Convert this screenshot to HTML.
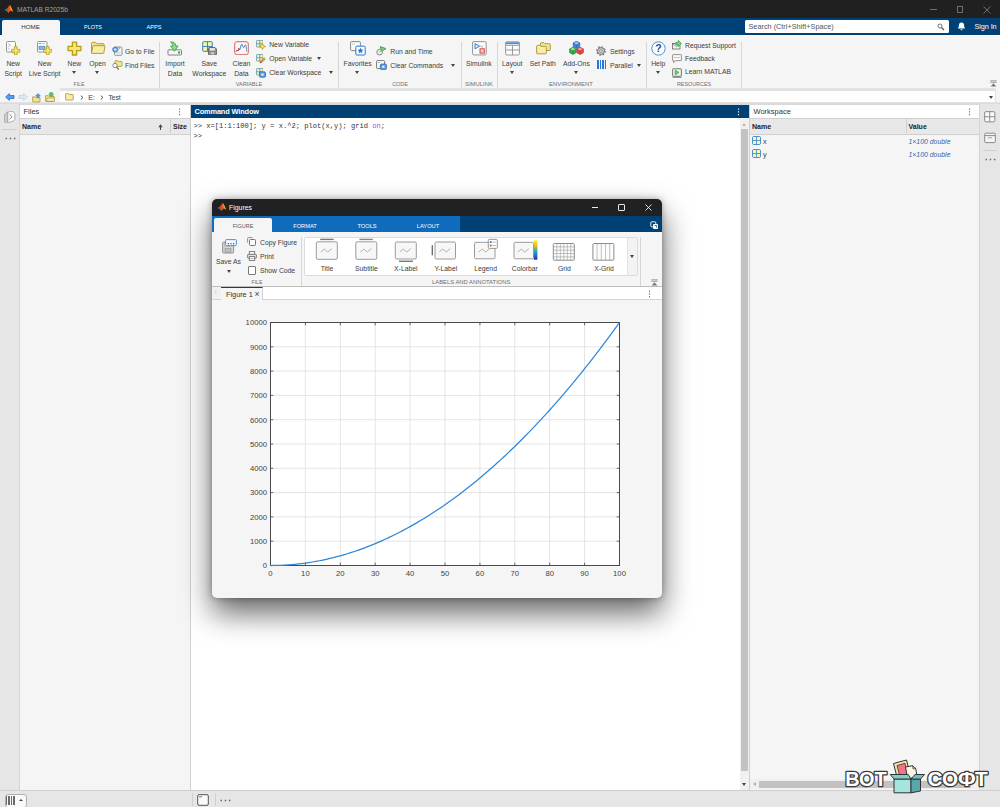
<!DOCTYPE html>
<html><head><meta charset="utf-8"><title>MATLAB R2025b</title>
<style>
*{box-sizing:border-box;margin:0;padding:0}
html,body{width:1000px;height:807px;overflow:hidden;background:#f5f5f5;font-family:"Liberation Sans",sans-serif;font-size:6.8px;color:#3c3c3c}
.a{position:absolute}
.t{position:absolute;white-space:nowrap;line-height:9px}
.c{text-align:center}
#titlebar{left:0;top:0;width:1000px;height:18px;background:#202020}
#tabbar{left:0;top:18px;width:1000px;height:17px;background:#004175}
#ribbon{left:0;top:35px;width:1000px;height:54px;background:#f5f5f5}
#addr{left:0;top:89px;width:1000px;height:15px;background:#f5f5f5}
.sep{position:absolute;width:1px;background:#d6d6d6;top:42px;height:46px}
.gl{color:#6e6e6e;font-size:6px;letter-spacing:0}
.dd{position:absolute;width:0;height:0;border-left:2.5px solid transparent;border-right:2.5px solid transparent;border-top:3px solid #444}
</style></head><body>
<!-- MAIN -->
<div class="a" id="titlebar"></div>
<div class="t" style="left:17px;top:5.2px;color:#a0a0a0;font-size:6.6px">MATLAB R2025b</div>
<div class="a" id="tabbar"></div>
<div class="a" style="left:1.5px;top:20px;width:58px;height:16px;background:#f5f5f5;border-radius:2px 2px 0 0"></div>
<div class="t c" style="left:1.5px;width:58px;top:22px;font-size:6.2px;color:#333">HOME</div>
<div class="t c" style="left:62.5px;width:60px;top:22px;font-size:6.2px;color:#fff;transform:scaleX(.88)">PLOTS</div>
<div class="t c" style="left:124px;width:60px;top:22px;font-size:6.2px;color:#fff;transform:scaleX(.9)">APPS</div>
<div class="a" id="ribbon"></div><div class="a" style="left:60px;top:34.500px;width:940px;height:1.500px;background:#fcfcfc"></div>
<div class="a" id="addr"></div>
<svg class="a" style="left:4.200px;top:5px" width="9.500" height="8.600" viewBox="0 0 11 10"><path d="M.3 5.800l2.800-1.300 1.300 1.400-1.500 1.200z" fill="#3a7bc0"/><path d="M3.100 4.500c1.200-.8 2.200-3.300 3.500-4.100.9-.3 1.900 2.600 3.900 7.300-1.100-.6-2-1.500-2.700-1.300-.8.300-1.400 1.800-2.300 2.800l-2.600-2.100 1.500-1.200z" fill="#d9541e"/><path d="M6.600.4c.9-.3 1.900 2.600 3.900 7.300-1.100-.6-2-1.500-2.700-1.300-.5-2.300-.7-4.500-1.200-6z" fill="#f6a21b"/></svg>
<div class="a" style="left:930px;top:9px;width:6.500px;height:1px;background:#6e6e6e"></div><div class="a" style="left:956.500px;top:6px;width:6.500px;height:6.500px;border:1px solid #6e6e6e"></div><svg class="a" style="left:983px;top:6px" width="8" height="8" viewBox="0 0 8 8"><path d="M.5.500l7 7M7.500.500l-7 7" stroke="#777" stroke-width=".9"/></svg>
<div class="a" style="left:745px;top:20px;width:203.500px;height:12.500px;background:#fff;border-radius:1.500px"></div><div class="t" style="left:748.5px;top:22px;font-size:7.3px;color:#555">Search (Ctrl+Shift+Space)</div>
<svg class="a" style="left:937px;top:23px" width="8" height="8" viewBox="0 0 8 8"><circle cx="3" cy="3" r="2" fill="none" stroke="#666" stroke-width=".9"/><path d="M4.500 4.500l2.500 2.500" stroke="#555" stroke-width="1.200"/></svg>
<svg class="a" style="left:957px;top:22px" width="9" height="9" viewBox="0 0 9 9"><path d="M4.500.500c1.700 0 2.600 1.300 2.600 2.900 0 1.700.6 2.500 1.200 3.100h-7.600c.6-.6 1.200-1.400 1.200-3.100 0-1.600.9-2.900 2.600-2.900z" fill="#fff"/><path d="M3.500 7.200h2c0 .7-.4 1.100-1 1.100s-1-.4-1-1.100z" fill="#fff"/></svg>
<div class="t" style="left:974.5px;top:22px;font-size:7.3px;color:#fff;letter-spacing:-.1px">Sign In</div>
<svg class="a" style="left:5.500px;top:40.500px" width="11" height="12" viewBox="0 0 11 12"><rect x=".5" y=".5" width="9" height="10.500" rx="1" fill="#fbfbfb" stroke="#8a8a8a" stroke-width=".9"/><path d="M2.300 2.600l2.200 1.700M2.300 6l2.200-1.700M2.300 7.800h1.500" stroke="#9a9a9a" stroke-width=".7" fill="none"/></svg>
<svg class="a" style="left:11.3px;top:45.8px" width="9.5" height="9.5" viewBox="0 0 10 10"><path d="M3.600.700h2.800v2.900h2.900v2.800h-2.900v2.900h-2.800v-2.900h-2.900v-2.800h2.900z" fill="#f6e76a" stroke="#b89d1c" stroke-width=".9" stroke-linejoin="round"/></svg>
<div class="t c " style="left:-26.8px;width:80px;top:58.9px;">New</div>
<div class="t c " style="left:-26.8px;width:80px;top:68.7px;">Script</div>
<svg class="a" style="left:37px;top:40.500px" width="11" height="12" viewBox="0 0 11 12"><rect x=".5" y=".5" width="9.500" height="10.500" rx="1" fill="#fbfbfb" stroke="#8a8a8a" stroke-width=".9"/><path d="M2 2.500h2" stroke="#d05050" stroke-width=".8"/><path d="M5 2.500h3" stroke="#aaa" stroke-width=".7"/><rect x="2" y="5.200" width="6" height="3.300" fill="#7db7ee" stroke="#3b7fc4" stroke-width=".6"/></svg>
<svg class="a" style="left:42.8px;top:45.8px" width="9.5" height="9.5" viewBox="0 0 10 10"><path d="M3.600.700h2.800v2.900h2.900v2.800h-2.900v2.900h-2.800v-2.900h-2.900v-2.800h2.900z" fill="#f6e76a" stroke="#b89d1c" stroke-width=".9" stroke-linejoin="round"/></svg>
<div class="t c " style="left:4.600000000000001px;width:80px;top:58.9px;">New</div>
<div class="t c " style="left:4.600000000000001px;width:80px;top:68.7px;">Live Script</div>
<svg class="a" style="left:67px;top:40.5px" width="15" height="15" viewBox="0 0 10 10"><path d="M3.600.700h2.800v2.900h2.900v2.800h-2.900v2.900h-2.800v-2.900h-2.900v-2.800h2.900z" fill="#f6e76a" stroke="#b89d1c" stroke-width=".9" stroke-linejoin="round"/></svg>
<div class="t c " style="left:34.400000000000006px;width:80px;top:58.9px;">New</div>
<div class="dd" style="left:71.9px;top:71px"></div>
<svg class="a" style="left:90px;top:41px" width="16" height="14" viewBox="0 0 16 14"><path d="M1.500 11.500v-9.300c0-.5.300-.8.800-.8h3.500l1.200 1.300h6.200c.5 0 .8.300.8.800v1.500" fill="#f3e68a" stroke="#a8923a" stroke-width=".9"/><path d="M1.500 12.300l1.300-7c.1-.4.400-.6.800-.6h10.600c.5 0 .8.300.7.800l-1.100 6.300c-.1.400-.4.600-.8.600h-11c-.4 0-.6-.1-.5-.1z" fill="#f7eda6" stroke="#a8923a" stroke-width=".9"/></svg>
<div class="t c " style="left:57.599999999999994px;width:80px;top:58.9px;">Open</div>
<div class="dd" style="left:95.1px;top:71px"></div>
<svg class="a" style="left:111.500px;top:46px" width="11" height="10" viewBox="0 0 11 10"><rect x="2.500" y="1" width="7.500" height="8.300" rx=".8" fill="#f4f4f4" stroke="#8a8a8a" stroke-width=".9"/><path d="M7 1.200c.5 1 .4 2-.4 2.500" fill="none" stroke="#d05050" stroke-width=".8"/><circle cx="3.200" cy="3.600" r="2.500" fill="#6aa9e8" stroke="#2f6fb8" stroke-width=".8"/><path d="M3.200 2.200l1.300 1.400-1.300 1.400-1.300-1.400z" fill="#eaf3fc"/><path d="M4.500 6.800h4" stroke="#bbb" stroke-width=".8"/></svg>
<div class="t" style="left:125px;top:47px;">Go to File</div>
<svg class="a" style="left:111.500px;top:59.500px" width="11" height="10" viewBox="0 0 11 10"><path d="M3 5.800v-4.500c0-.4.200-.6.600-.6h2l.8.800h3c.4 0 .6.200.6.600v3.700c0 .4-.2.600-.6.600h-5.800c-.4 0-.6-.2-.6-.6z" fill="#f5e885" stroke="#a8923a" stroke-width=".8"/><circle cx="3" cy="5.500" r="2.200" fill="#f6f6f6" stroke="#777" stroke-width=".8"/><path d="M4.600 7.200l2.200 2.300" stroke="#666" stroke-width="1.100"/></svg>
<div class="t" style="left:125px;top:60.7px;">Find Files</div>
<div class="t c gl" style="left:39.3px;width:80px;top:80px;transform:scaleX(0.87)">FILE</div>
<div class="sep" style="left:159px"></div>
<svg class="a" style="left:167px;top:40.500px" width="16" height="15" viewBox="0 0 16 15"><rect x="1" y="8.800" width="13.500" height="5.200" rx=".6" fill="#f7f7f7" stroke="#777" stroke-width=".9"/><rect x="11" y="10.500" width="2.200" height="2" fill="#35a845"/><path d="M3.500 1c3.300-.3 5.200 1.200 5.300 4h2.300l-3.700 5.300-3.700-5.300h2.300c0-1.600-.8-2.800-2.500-4z" fill="#8fdc8a" stroke="#2e9a3c" stroke-width=".8" stroke-linejoin="round"/></svg>
<div class="t c " style="left:135px;width:80px;top:58.9px;">Import</div>
<div class="t c " style="left:135px;width:80px;top:68.7px;">Data</div>
<svg class="a" style="left:202px;top:40.8px" width="11" height="11" viewBox="0 0 10 10"><rect x=".6" y=".6" width="8.800" height="8.800" rx="1" fill="#f9f1a4" stroke="#3e86b8" stroke-width=".9"/><path d="M5 .600v8.800M.600 5h8.800" stroke="#3e86b8" stroke-width=".9"/></svg>
<svg class="a" style="left:207.500px;top:46.500px" width="9" height="8.500" viewBox="0 0 9 8.500"><path d="M.5 1.300c0-.5.300-.8.800-.8h5.700l1.500 1.500v5.200c0 .5-.3.800-.8.800h-6.400c-.5 0-.8-.3-.8-.8z" fill="#8e8e8e" stroke="#5a5a5a" stroke-width=".8"/><rect x="1.800" y="1" width="5" height="2.600" fill="#e4e4e4"/><rect x="2.200" y="5" width="4.600" height="2.800" fill="#d0d0d0" stroke="#666" stroke-width=".4"/></svg>
<div class="t c " style="left:169.3px;width:80px;top:58.9px;">Save</div>
<div class="t c " style="left:169.3px;width:80px;top:68.7px;">Workspace</div>
<svg class="a" style="left:234px;top:40.500px" width="15" height="14.500" viewBox="0 0 15 14.500"><rect x=".7" y=".7" width="13.600" height="13" rx="2.200" fill="#fdf6f5" stroke="#d9635a" stroke-width="1"/><path d="M2.200 10.500l1-1.500.8 1 .8-2.500.8 1.500c.6 0 1.200-5.800 2.200-5.800s1 3.500 1.800 3.500 1-2.800 1.800-2.800 1 4 1.300 6.600" fill="none" stroke="#3577c7" stroke-width=".9"/><path d="M2.200 10.500l1-1.500.8 1 .8-2.500.8 1.500" fill="none" stroke="#d9443a" stroke-width=".9"/></svg>
<div class="t c " style="left:201.4px;width:80px;top:58.9px;">Clean</div>
<div class="t c " style="left:201.4px;width:80px;top:68.7px;">Data</div>
<svg class="a" style="left:255.5px;top:40px" width="7.5" height="7.5" viewBox="0 0 10 10"><rect x=".6" y=".6" width="8.800" height="8.800" rx="1" fill="#f9f1a4" stroke="#3e86b8" stroke-width=".9"/><path d="M5 .600v8.800M.600 5h8.800" stroke="#3e86b8" stroke-width=".9"/></svg>
<svg class="a" style="left:255.5px;top:54px" width="7.5" height="7.5" viewBox="0 0 10 10"><rect x=".6" y=".6" width="8.800" height="8.800" rx="1" fill="#f9f1a4" stroke="#3e86b8" stroke-width=".9"/><path d="M5 .600v8.800M.600 5h8.800" stroke="#3e86b8" stroke-width=".9"/></svg>
<svg class="a" style="left:255.5px;top:68px" width="7.5" height="7.5" viewBox="0 0 10 10"><rect x=".6" y=".6" width="8.800" height="8.800" rx="1" fill="#f9f1a4" stroke="#3e86b8" stroke-width=".9"/><path d="M5 .600v8.800M.600 5h8.800" stroke="#3e86b8" stroke-width=".9"/></svg>
<svg class="a" style="left:259px;top:43px" width="7" height="7" viewBox="0 0 7 7"><path d="M3.500.500l1 2 2 1-2 1-1 2-1-2-2-1 2-1z" fill="#f6e76a" stroke="#a8901c" stroke-width=".7" stroke-linejoin="round"/></svg>
<svg class="a" style="left:259px;top:57px" width="7" height="7" viewBox="0 0 7 7"><path d="M1 6l.5-1.800 3.500-3.500 1.300 1.300-3.500 3.500z" fill="#e8a33a" stroke="#9a6a1c" stroke-width=".6"/><path d="M1 6l.5-1.800 1.300 1.300z" fill="#c33"/></svg>
<svg class="a" style="left:259px;top:71px" width="7" height="7" viewBox="0 0 7 7"><rect x=".5" y=".8" width="6" height="5.500" rx="1.200" fill="#5b9be0" stroke="#2b64ad" stroke-width=".7"/><circle cx="3.500" cy="3.600" r="1.300" fill="#dcebfa"/></svg>
<div class="t" style="left:269.2px;top:40px;">New Variable</div>
<div class="t" style="left:269.2px;top:54px;">Open Variable</div>
<div class="dd" style="left:317.3px;top:57.2px"></div>
<div class="t" style="left:269.2px;top:68px;">Clear Workspace</div>
<div class="dd" style="left:328.8px;top:71.2px"></div>
<div class="t c gl" style="left:209px;width:80px;top:80px;transform:scaleX(0.92)">VARIABLE</div>
<div class="sep" style="left:338px"></div>
<svg class="a" style="left:350px;top:40.500px" width="16" height="15" viewBox="0 0 16 15"><rect x=".6" y=".6" width="9.800" height="9" rx="1" fill="#fafafa" stroke="#7a7a7a" stroke-width=".9"/><path d="M2.200 3h1.200M4.200 3h.8" stroke="#999" stroke-width=".7"/><rect x="5.800" y="5.200" width="9.400" height="8.800" rx="1" fill="#fff" stroke="#2d76c8" stroke-width="1"/><path d="M10.500 6.700l.9 1.900 2 .2-1.500 1.400.4 2-1.800-1-1.800 1 .4-2-1.500-1.400 2-.2z" fill="#2d76c8"/></svg>
<div class="t c " style="left:317.6px;width:80px;top:58.9px;">Favorites</div>
<div class="dd" style="left:355.1px;top:71px"></div>
<svg class="a" style="left:376px;top:46px" width="11" height="10" viewBox="0 0 11 10"><path d="M4.200.600l5.800 2-4.300 2.700z" fill="#7fd67a" stroke="#2e9a3c" stroke-width=".8" stroke-linejoin="round"/><circle cx="3.600" cy="6.200" r="2.800" fill="#f0f0f0" stroke="#777" stroke-width=".9"/><path d="M3.600 6.200l1.300-1.600" stroke="#555" stroke-width=".7"/></svg>
<div class="t" style="left:390.3px;top:47px;">Run and Time</div>
<svg class="a" style="left:376px;top:60px" width="11" height="10" viewBox="0 0 11 10"><rect x=".6" y=".6" width="8" height="8" rx=".8" fill="#fafafa" stroke="#6a6a6a" stroke-width=".9"/><path d="M2 2.600h1.800" stroke="#888" stroke-width=".7"/><rect x="4.300" y="4" width="6.200" height="5.500" rx="1.200" fill="#5b9be0" stroke="#2b64ad" stroke-width=".7"/><circle cx="7.400" cy="6.800" r="1.300" fill="#dcebfa"/></svg>
<div class="t" style="left:390.3px;top:61px;">Clear Commands</div>
<div class="dd" style="left:451.0px;top:64.2px"></div>
<div class="t c gl" style="left:360px;width:80px;top:80px;transform:scaleX(0.9)">CODE</div>
<div class="sep" style="left:460.5px"></div>
<svg class="a" style="left:471.500px;top:40.500px" width="15" height="15" viewBox="0 0 15 15"><rect x=".6" y=".6" width="13.600" height="13.300" rx="1.300" fill="#fafafa" stroke="#8a8a8a" stroke-width=".9"/><path d="M3 2.600l4.500 2.600-4.500 2.600z" fill="#dcecfb" stroke="#2d76c8" stroke-width=".9" stroke-linejoin="round"/><path d="M7.500 5.200h2.800v2.500" fill="none" stroke="#999" stroke-width=".6"/><rect x="8" y="7.800" width="4.300" height="4.300" fill="#f7c6c6" stroke="#d23c3c" stroke-width=".9"/></svg>
<div class="t c " style="left:438.8px;width:80px;top:58.9px;">Simulink</div>
<div class="t c gl" style="left:438.6px;width:80px;top:80px;transform:scaleX(0.99)">SIMULINK</div>
<div class="sep" style="left:497px"></div>
<svg class="a" style="left:504.500px;top:40.500px" width="15" height="15" viewBox="0 0 15 15"><rect x=".6" y=".8" width="13.800" height="13.200" rx="1.300" fill="#fbfbfb" stroke="#909090" stroke-width=".9"/><path d="M.600 2.200h13.800" stroke="#4a90d9" stroke-width="1.800"/><path d="M.600 4.300h13.800M.600 9h13.800M7.500 4.300v9.700" stroke="#909090" stroke-width=".9"/></svg>
<div class="t c " style="left:472.29999999999995px;width:80px;top:58.9px;">Layout</div>
<div class="dd" style="left:510.1px;top:71px"></div>
<svg class="a" style="left:535.500px;top:42px" width="15" height="12.500" viewBox="0 0 15 12.500"><path d="M4.500 8.500v-7c0-.5.300-.8.800-.8h2.700l.9 1h4.600c.5 0 .8.300.8.800v5.200c0 .5-.3.800-.8.800z" fill="#f3e68a" stroke="#a8923a" stroke-width=".9"/><path d="M.600 11v-6.800c0-.5.300-.8.800-.8h2.700l.9 1h4.600c.5 0 .8.300.8.800v5.800c0 .5-.3.800-.8.800h-8.200c-.5 0-.8-.3-.8-.8z" fill="#f7eda6" stroke="#a8923a" stroke-width=".9"/></svg>
<div class="t c " style="left:502.79999999999995px;width:80px;top:58.9px;">Set Path</div>
<svg class="a" style="left:568.500px;top:41px" width="15" height="14" viewBox="0 0 15 14"><g transform="translate(4,0.4)"><path d="M3.500 0l3.300 1.700v3.600l-3.300 1.700-3.300-1.700v-3.600z" fill="#3d85d8" stroke="#1f5fae" stroke-width=".6"/><path d="M3.500 0l3.300 1.700-3.300 1.700-3.300-1.700z" fill="#9cc6f2" stroke="#1f5fae" stroke-width=".5"/><path d="M3.500 3.400v3.600" stroke="#1f5fae" stroke-width=".5"/></g><g transform="translate(0.4,6.4)"><path d="M3.500 0l3.300 1.700v3.600l-3.300 1.700-3.300-1.700v-3.600z" fill="#3aae4a" stroke="#1f8430" stroke-width=".6"/><path d="M3.500 0l3.300 1.700-3.300 1.700-3.300-1.700z" fill="#a5e2a8" stroke="#1f8430" stroke-width=".5"/><path d="M3.500 3.400v3.600" stroke="#1f8430" stroke-width=".5"/></g><g transform="translate(7.6,6.4)"><path d="M3.500 0l3.300 1.700v3.600l-3.300 1.700-3.300-1.700v-3.600z" fill="#e04a4a" stroke="#b02525" stroke-width=".6"/><path d="M3.500 0l3.300 1.700-3.300 1.700-3.300-1.700z" fill="#f5aaaa" stroke="#b02525" stroke-width=".5"/><path d="M3.500 3.400v3.600" stroke="#b02525" stroke-width=".5"/></g></svg>
<div class="t c " style="left:536.4px;width:80px;top:58.9px;">Add-Ons</div>
<div class="dd" style="left:573.8px;top:71px"></div>
<svg class="a" style="left:596px;top:46px" width="10" height="10" viewBox="0 0 10 10"><circle cx="5" cy="5" r="3.400" fill="#d8d8d8" stroke="#6a6a6a" stroke-width=".9"/><circle cx="5" cy="5" r="4.200" fill="none" stroke="#6a6a6a" stroke-width="1.300" stroke-dasharray="1.500 1.800"/><circle cx="5" cy="5" r="1.400" fill="#f5f5f5" stroke="#6a6a6a" stroke-width=".7"/></svg>
<div class="t" style="left:610px;top:46.5px;">Settings</div>
<div class="a" style="left:596.500px;top:60px;width:9px;height:9px;background:repeating-linear-gradient(90deg,#2d76d0 0,#2d76d0 1.500px,#f5f5f5 1.500px,#f5f5f5 2.500px)"></div>
<div class="t" style="left:610px;top:60.5px;">Parallel</div>
<div class="dd" style="left:636.5px;top:64px"></div>
<div class="t c gl" style="left:531.4px;width:80px;top:80px;transform:scaleX(0.99)">ENVIRONMENT</div>
<div class="sep" style="left:646px"></div>
<svg class="a" style="left:651px;top:40.500px" width="15" height="15" viewBox="0 0 15 15" font-family="Liberation Sans, sans-serif"><circle cx="7.500" cy="7.500" r="6.700" fill="#fff" stroke="#4a90d9" stroke-width="1"/><text x="7.500" y="11.300" font-size="10.500" font-weight="bold" text-anchor="middle" fill="#1d4f9c">?</text></svg>
<div class="t c " style="left:618.2px;width:80px;top:58.9px;">Help</div>
<div class="dd" style="left:655.7px;top:71px"></div>
<svg class="a" style="left:672px;top:40px" width="10" height="10" viewBox="0 0 10 10"><rect x=".5" y="3.500" width="7.500" height="5.500" fill="#f2f2f2" stroke="#666" stroke-width=".8"/><path d="M.500 3.500l3.800 3 3.700-3" fill="none" stroke="#666" stroke-width=".7"/><path d="M6.300.500l3.200 3-3.200 3v-1.800h-2.500v-2.400h2.500z" fill="#7fd67a" stroke="#2e9a3c" stroke-width=".7" stroke-linejoin="round"/></svg>
<div class="t" style="left:685px;top:40.5px;">Request Support</div>
<svg class="a" style="left:672px;top:54px" width="10" height="10" viewBox="0 0 10 10"><path d="M.6 1.200c0-.4.200-.6.600-.6h7.600c.4 0 .6.200.6.600v4.800c0 .4-.2.600-.6.600h-5.300l-1.800 2v-2h-.5c-.4 0-.6-.2-.6-.6z" fill="#fafafa" stroke="#777" stroke-width=".8"/><path d="M2.500 3.500h.9M4.500 3.500h.9M6.500 3.500h.9" stroke="#777" stroke-width=".9"/></svg>
<div class="t" style="left:685px;top:54.3px;">Feedback</div>
<svg class="a" style="left:672px;top:67.500px" width="10" height="10" viewBox="0 0 10 10"><rect x=".6" y=".8" width="8.800" height="7.500" rx=".6" fill="#eaf7ea" stroke="#666" stroke-width=".9"/><path d="M3.300 2.300l3.600 2.200-3.600 2.200z" fill="#7fd67a" stroke="#2e9a3c" stroke-width=".8" stroke-linejoin="round"/><path d="M.600 9.300h8.800" stroke="#666" stroke-width=".8"/></svg>
<div class="t" style="left:685px;top:67.300px;">Learn MATLAB</div>
<div class="t c gl" style="left:653.6px;width:80px;top:80px;transform:scaleX(0.9)">RESOURCES</div>
<div class="sep" style="left:740.5px"></div>
<svg class="a" style="left:989.500px;top:79.500px" width="7" height="7" viewBox="0 0 7 7"><path d="M.300.800h6.400M.300 2.300h6.400" stroke="#777" stroke-width=".7"/><path d="M3.500 3.300l2.800 3.200h-5.600z" fill="#777"/></svg>
<!--RIBBON-->

<div class="a" style="left:59.500px;top:88.400px;width:936px;height:14.400px;background:#e2e2e2;border-radius:2px"></div><div class="a" style="left:0;top:102.400px;width:1000px;height:2.600px;background:linear-gradient(#e6e6e6,#d2d2d2)"></div><div class="a" style="left:60px;top:90.600px;width:935px;height:11.600px;background:#fff;border-radius:1px"></div>
<svg class="a" style="left:4.500px;top:92.500px" width="10" height="8" viewBox="0 0 10 8"><path d="M.600 4l3.700-3.400v1.900h4.700v3h-4.700v1.900z" fill="#58a0ea" stroke="#2a6fc4" stroke-width=".8" stroke-linejoin="round"/></svg>
<svg class="a" style="left:17.500px;top:92.500px" width="10" height="8" viewBox="0 0 10 8"><path d="M9.400 4l-3.700-3.400v1.900h-4.700v3h4.700v1.900z" fill="#dfeaf6" stroke="#bcd0e6" stroke-width=".8" stroke-linejoin="round"/></svg>
<svg class="a" style="left:32px;top:92.500px" width="10" height="10" viewBox="0 0 10 10"><path d="M.600 8.500v-4.600h2.600l.8.800h4v3.800c0 .3-.2.500-.5.500h-6.400c-.3 0-.5-.2-.5-.5z" fill="#f3e68a" stroke="#a8923a" stroke-width=".8"/><path d="M6 .500l2.300 2.500h-1.400v1.500h-1.800v-1.500h-1.400z" fill="#58a0ea" stroke="#2a6fc4" stroke-width=".5"/></svg>
<svg class="a" style="left:44.500px;top:92px" width="11" height="10" viewBox="0 0 11 10"><path d="M.600 9v-5.300h2.800l.8.900h5v4.400c0 .3-.2.500-.5.500h-7.600c-.3 0-.5-.2-.5-.5z" fill="#f3e68a" stroke="#a8923a" stroke-width=".8"/><path d="M1.500 9.300l.6-3.300h7.700l-.6 3.300z" fill="#f9f0b0" stroke="#a8923a" stroke-width=".6"/><circle cx="6.200" cy="2.300" r="1.900" fill="#62c462" stroke="#2e9a3c" stroke-width=".6"/></svg>
<svg class="a" style="left:64.500px;top:93px" width="9" height="8" viewBox="0 0 9 8"><path d="M.600 6.600v-5.500c0-.3.200-.5.500-.5h2.200l.8.900h3.600c.3 0 .5.200.5.500v4.600c0 .3-.2.500-.5.500h-6.600c-.3 0-.5-.2-.5-.5z" fill="#f7eda6" stroke="#a8923a" stroke-width=".8"/></svg>
<svg class="a" style="left:79.500px;top:95px" width="4" height="5" viewBox="0 0 4 5"><path d="M.800.600l2.200 1.900-2.200 1.900" fill="none" stroke="#444" stroke-width=".9"/></svg>
<div class="t" style="left:88.300px;top:93px;font-size:7.200px;letter-spacing:-.2px;color:#444">E:</div>
<svg class="a" style="left:100px;top:95px" width="4" height="5" viewBox="0 0 4 5"><path d="M.800.600l2.200 1.900-2.200 1.900" fill="none" stroke="#444" stroke-width=".9"/></svg>
<div class="t" style="left:108.200px;top:93px;font-size:7.200px;letter-spacing:-.2px;color:#444">Test</div>
<div class="dd" style="left:988.500px;top:95.500px"></div>
<!--ADDR-->

<!-- left sidebar -->
<div class="a" style="left:0;top:104px;width:20px;height:686px;background:#e6e6e6;border-right:1px solid #d4d4d4"></div>
<svg class="a" style="left:4px;top:110.800px" width="11.500" height="12.500" viewBox="0 0 11.500 12.500"><path d="M.600 4.200c0-1 .4-1.600 1.200-2l2-1.300v10.800l-1.700.4c-.9.100-1.500-.400-1.500-1.300z" fill="#cfcfcf" stroke="#9a9a9a" stroke-width=".7"/><path d="M3.800 2.200c0-1 .7-1.600 1.600-1.600h2.600c1.700 0 2.900 1.200 2.900 2.800v4.200c0 1.200-.6 2-1.700 2.400l-3.700 1.300c-1 .3-1.700-.2-1.700-1.100z" fill="#fdfdfd" stroke="#9a9a9a" stroke-width=".8"/><path d="M5.500 3.300l2.600 2.500-2.600 2.500" fill="none" stroke="#6a6a6a" stroke-width=".8"/></svg>
<div class="a" style="left:2px;top:129px;width:15px;height:1px;background:#cfcfcf"></div>
<svg class="a" style="left:4.5px;top:137px" width="11" height="3" viewBox="0 0 11 3"><path d="M.5 1.500h1.500M4.700 1.500h1.500M8.900 1.500h1.500" stroke="#6a6a6a" stroke-width="1.400"/></svg>
<!-- files panel -->
<div class="a" style="left:20px;top:104px;width:171px;height:686px;background:#f5f5f5;border-right:1px solid #cfcfcf;border-top:1px solid #d9d9d9"></div>
<div class="a" style="left:20px;top:105px;width:170px;height:13px;background:#fff"></div>
<div class="t" style="left:23.5px;top:107px;font-size:7.5px;color:#333">Files</div>
<svg class="a" style="left:177.5px;top:107.5px" width="3" height="8" viewBox="0 0 3 8"><path d="M1.500.600v1.200M1.500 3.300v1.200M1.500 6v1.200" stroke="#6a6a6a" stroke-width="1.100"/></svg>
<div class="a" style="left:20px;top:118px;width:170px;height:16.500px;background:#e8e8e8;border-top:1px solid #d0d0d0;border-bottom:1px solid #d0d0d0"></div>
<div class="t" style="left:22px;top:122px;font-size:7px;font-weight:bold;color:#222">Name</div>
<svg class="a" style="left:158px;top:123.500px" width="5" height="6" viewBox="0 0 5 6"><path d="M2.500 6v-3" stroke="#444" stroke-width="1"/><path d="M.300 3.200l2.200-2.900 2.200 2.900z" fill="#444"/></svg>
<div class="a" style="left:170px;top:119px;width:1px;height:14px;background:#cfcfcf"></div>
<div class="t" style="left:173px;top:122px;font-size:7px;font-weight:bold;color:#222">Size</div>
<!-- command window -->
<div class="a" style="left:191px;top:104px;width:558px;height:686px;background:#fff"></div>
<div class="a" style="left:191px;top:104px;width:558px;height:1px;background:#d9d9d9"></div><div class="a" style="left:191px;top:105px;width:558px;height:12.800px;background:#004175"></div>
<div class="t" style="left:194.5px;top:106.800px;font-size:7.4px;font-weight:bold;color:#fff;letter-spacing:-.15px">Command Window</div>
<svg class="a" style="left:736.5px;top:107.5px" width="3" height="8" viewBox="0 0 3 8"><path d="M1.500.600v1.200M1.500 3.300v1.200M1.500 6v1.200" stroke="#fff" stroke-width="1.100"/></svg>
<div class="t" style="left:193.5px;top:122px;font-family:'Liberation Mono',monospace;font-size:7.1px;color:#333">&gt;&gt; x=[1:1:100]; y = x.^2; plot(x,y); grid <span style="color:#9b4fd6">on</span>;</div>
<div class="t" style="left:193.5px;top:131.700px;font-family:'Liberation Mono',monospace;font-size:7.1px;color:#333">&gt;&gt;</div>
<!-- cmd scrollbar -->
<div class="a" style="left:740px;top:118px;width:9px;height:672px;background:#f1f1f1"></div>
<div class="a" style="left:741px;top:129px;width:6.500px;height:642px;background:#c2c2c2"></div>
<div class="a" style="left:741.500px;top:122.500px;width:0;height:0;border-left:2.5px solid transparent;border-right:2.5px solid transparent;border-bottom:3px solid #b8b8b8"></div>
<div class="a" style="left:741.500px;top:783px;width:0;height:0;border-left:2.5px solid transparent;border-right:2.5px solid transparent;border-top:3px solid #444"></div>
<!-- workspace -->
<div class="a" style="left:749px;top:104px;width:231px;height:686px;background:#f5f5f5;border-left:1px solid #cfcfcf;border-top:1px solid #d9d9d9"></div>
<div class="a" style="left:750px;top:105px;width:229px;height:13px;background:#fff"></div>
<div class="t" style="left:753.5px;top:107px;font-size:7.5px;color:#333">Workspace</div>
<svg class="a" style="left:967.5px;top:107.5px" width="3" height="8" viewBox="0 0 3 8"><path d="M1.500.600v1.200M1.500 3.300v1.200M1.500 6v1.200" stroke="#6a6a6a" stroke-width="1.100"/></svg>
<div class="a" style="left:750px;top:118px;width:229px;height:16.500px;background:#e8e8e8;border-top:1px solid #d0d0d0;border-bottom:1px solid #d0d0d0"></div>
<div class="t" style="left:752px;top:122px;font-size:7px;font-weight:bold;color:#222">Name</div>
<div class="a" style="left:906px;top:119px;width:1px;height:14px;background:#cfcfcf"></div>
<div class="t" style="left:908.5px;top:122px;font-size:7px;font-weight:bold;color:#222">Value</div>
<svg class="a" style="left:752px;top:136px" width="9" height="9" viewBox="0 0 9 9"><rect x=".5" y=".5" width="8" height="8" rx="1.200" fill="#fbf6b0" stroke="#4a8fd0"/><path d="M4.500 .5v8M.5 4.500h8" stroke="#4a8fd0" stroke-width=".9"/></svg>
<svg class="a" style="left:752px;top:149px" width="9" height="9" viewBox="0 0 9 9"><rect x=".5" y=".5" width="8" height="8" rx="1.200" fill="#fbf6b0" stroke="#4a8fd0"/><path d="M4.500 .5v8M.5 4.500h8" stroke="#4a8fd0" stroke-width=".9"/></svg>
<div class="t" style="left:763px;top:137px;font-size:7.4px;color:#444">x</div>
<div class="t" style="left:763px;top:149.5px;font-size:7.4px;color:#444">y</div>
<div class="t" style="left:908.5px;top:137px;font-size:6.9px;font-style:italic;color:#2f68ad">1×100 double</div>
<div class="t" style="left:908.5px;top:149.5px;font-size:6.9px;font-style:italic;color:#2f68ad">1×100 double</div>
<!-- workspace h-scrollbar -->
<div class="a" style="left:750px;top:779px;width:229px;height:10px;background:#f0f0f0"></div>
<div class="a" style="left:759px;top:781px;width:212px;height:7px;background:#c2c2c2"></div>
<div class="a" style="left:753px;top:782px;width:0;height:0;border-top:2.5px solid transparent;border-bottom:2.5px solid transparent;border-right:3px solid #b0b0b0"></div>
<!-- right sidebar -->
<div class="a" style="left:979px;top:104px;width:21px;height:686px;background:#e6e6e6;border-left:1px solid #d4d4d4"></div>
<svg class="a" style="left:984px;top:111.200px" width="11.500" height="11.500" viewBox="0 0 12 12"><rect x=".7" y=".7" width="10.600" height="10.600" rx="1.300" fill="#fbfbfb" stroke="#858585" stroke-width="1"/><path d="M6 .7v10.600M.7 6h10.600" stroke="#858585" stroke-width="1"/></svg>
<svg class="a" style="left:984px;top:132px" width="12" height="12" viewBox="0 0 12 12"><rect x=".7" y="1.200" width="10.600" height="9.400" rx="1" fill="#f4f4f4" stroke="#8a8a8a" stroke-width="1"/><path d="M.7 3.600h10.600" stroke="#8a8a8a" stroke-width="1"/><path d="M4 5.800h4" stroke="#999" stroke-width=".9"/></svg>
<div class="a" style="left:983px;top:150px;width:14px;height:1px;background:#cfcfcf"></div>
<svg class="a" style="left:984.5px;top:158px" width="11" height="3" viewBox="0 0 11 3"><path d="M.5 1.500h1.500M4.700 1.500h1.500M8.900 1.500h1.500" stroke="#6a6a6a" stroke-width="1.400"/></svg>
<!-- status bar -->
<div class="a" style="left:0;top:790px;width:1000px;height:17px;background:#e6e6e6;border-top:1px solid #cfcfcf"></div>
<div class="a" style="left:4.500px;top:794px;width:22px;height:13.500px;background:#f9f9f9;border:1px solid #b0b0b0;border-radius:3px"></div>
<div class="a" style="left:6.200px;top:796px;width:8.800px;height:8.500px;background:repeating-linear-gradient(90deg,#6a6a6a 0,#6a6a6a 1.400px,#f9f9f9 1.400px,#f9f9f9 2.400px)"></div>
<div class="a" style="left:19px;top:798.5px;width:0;height:0;border-left:2px solid transparent;border-right:2px solid transparent;border-bottom:2.5px solid #444"></div>
<div class="a" style="left:192px;top:793px;width:1px;height:13px;background:#cfcfcf"></div>
<svg class="a" style="left:197px;top:794px" width="12" height="12" viewBox="0 0 12 12"><rect x=".7" y=".7" width="10.6" height="10.6" rx="1.3" fill="#fafafa" stroke="#555" stroke-width="1"/><path d="M2 2.8h3" stroke="#777" stroke-width="1"/></svg>
<div class="a" style="left:215px;top:793px;width:1px;height:13px;background:#cfcfcf"></div>
<svg class="a" style="left:220px;top:798.5px" width="11" height="3" viewBox="0 0 11 3"><path d="M.5 1.500h1.500M4.700 1.500h1.500M8.900 1.500h1.500" stroke="#6a6a6a" stroke-width="1.400"/></svg>
<!--PANELS-->

<div class="a" style="left:212px;top:199px;width:449.5px;height:398.5px;border-radius:5px;background:#f5f5f5;box-shadow:0 15px 30px rgba(0,0,0,.6),0 0 7px rgba(0,0,0,.3);overflow:hidden" id="figwin">
 <div class="a" style="left:0;top:0;width:450px;height:17px;background:#1f2123"></div>
 <div class="t" style="left:17px;top:4.200px;font-size:6.9px;color:#fff">Figures</div>
 <div class="a" style="left:0;top:17px;width:450px;height:16.500px;background:#004175"></div>
 <div class="a" style="left:0;top:17px;width:248px;height:16.500px;background:#0f6cbd"></div>
 <div class="a" style="left:2px;top:19px;width:58px;height:15.500px;background:#f5f5f5;border-radius:2px 2px 0 0"></div>
 <div class="t c" style="left:2px;width:58px;top:21.500px;font-size:6.2px;color:#555;transform:scaleX(.88)">FIGURE</div>
 <div class="t c" style="left:62px;width:62px;top:21.500px;font-size:6.2px;color:#fff;transform:scaleX(.92)">FORMAT</div>
 <div class="t c" style="left:124px;width:62px;top:21.500px;font-size:6.2px;color:#fff;transform:scaleX(.92)">TOOLS</div>
 <div class="t c" style="left:186px;width:60px;top:21.500px;font-size:6.2px;color:#fff;transform:scaleX(.92)">LAYOUT</div>
 <div class="a" style="left:0;top:33px;width:450px;height:55px;background:#f5f5f5;border-bottom:1px solid #bdbdbd"></div>
 <!--FIGRIBBON-->
 <div class="a" style="left:0;top:88px;width:450px;height:13px;background:#fff;border-bottom:1px solid #d5d5d5"></div>
 <div class="a" style="left:0;top:88px;width:9px;height:12px;background:#f1f1f1"></div>
 <div class="t" style="left:3px;top:89px;font-size:5px;color:#888;line-height:8px">⁞</div>
 <div class="a" style="left:9px;top:88px;width:42px;height:13px;background:#f5f5f5;border-top:1.600px solid #0a3f80;border-right:1px solid #d5d5d5"></div>
 <div class="t" style="left:14px;top:91px;font-size:7.3px;color:#333">Figure 1</div>
 <div class="t" style="left:42.5px;top:90.500px;font-size:8.5px;color:#444">×</div>
 <svg class="a" style="left:436px;top:91px" width="3" height="8" viewBox="0 0 3 8"><path d="M1.500.600v1.200M1.500 3.300v1.200M1.500 6v1.200" stroke="#6a6a6a" stroke-width="1.100"/></svg>
</div>
<svg class="a" style="left:0;top:0;pointer-events:none" width="1000" height="807" viewBox="0 0 1000 807" font-family="Liberation Sans, sans-serif" font-size="7.700" fill="#444">
<rect x="270.5" y="322.5" width="349.0" height="243.0" fill="#fff"/>
<path d="M305.40 322.5V565.5" stroke="#e2e2e2" stroke-width=".9"/><path d="M270.5 541.20H619.5" stroke="#e2e2e2" stroke-width=".9"/><path d="M340.30 322.5V565.5" stroke="#e2e2e2" stroke-width=".9"/><path d="M270.5 516.90H619.5" stroke="#e2e2e2" stroke-width=".9"/><path d="M375.20 322.5V565.5" stroke="#e2e2e2" stroke-width=".9"/><path d="M270.5 492.60H619.5" stroke="#e2e2e2" stroke-width=".9"/><path d="M410.10 322.5V565.5" stroke="#e2e2e2" stroke-width=".9"/><path d="M270.5 468.30H619.5" stroke="#e2e2e2" stroke-width=".9"/><path d="M445.00 322.5V565.5" stroke="#e2e2e2" stroke-width=".9"/><path d="M270.5 444.00H619.5" stroke="#e2e2e2" stroke-width=".9"/><path d="M479.90 322.5V565.5" stroke="#e2e2e2" stroke-width=".9"/><path d="M270.5 419.70H619.5" stroke="#e2e2e2" stroke-width=".9"/><path d="M514.80 322.5V565.5" stroke="#e2e2e2" stroke-width=".9"/><path d="M270.5 395.40H619.5" stroke="#e2e2e2" stroke-width=".9"/><path d="M549.70 322.5V565.5" stroke="#e2e2e2" stroke-width=".9"/><path d="M270.5 371.10H619.5" stroke="#e2e2e2" stroke-width=".9"/><path d="M584.60 322.5V565.5" stroke="#e2e2e2" stroke-width=".9"/><path d="M270.5 346.80H619.5" stroke="#e2e2e2" stroke-width=".9"/>
<rect x="270.5" y="322.5" width="349.0" height="243.0" fill="none" stroke="#4a4a4a" stroke-width="1"/>
<path d="M270.50 565.5v-2.800M270.50 322.5v2.800" stroke="#444" stroke-width=".8"/><path d="M270.5 565.50h2.800M619.5 565.50h-2.800" stroke="#444" stroke-width=".8"/><path d="M305.40 565.5v-2.800M305.40 322.5v2.800" stroke="#444" stroke-width=".8"/><path d="M270.5 541.20h2.800M619.5 541.20h-2.800" stroke="#444" stroke-width=".8"/><path d="M340.30 565.5v-2.800M340.30 322.5v2.800" stroke="#444" stroke-width=".8"/><path d="M270.5 516.90h2.800M619.5 516.90h-2.800" stroke="#444" stroke-width=".8"/><path d="M375.20 565.5v-2.800M375.20 322.5v2.800" stroke="#444" stroke-width=".8"/><path d="M270.5 492.60h2.800M619.5 492.60h-2.800" stroke="#444" stroke-width=".8"/><path d="M410.10 565.5v-2.800M410.10 322.5v2.800" stroke="#444" stroke-width=".8"/><path d="M270.5 468.30h2.800M619.5 468.30h-2.800" stroke="#444" stroke-width=".8"/><path d="M445.00 565.5v-2.800M445.00 322.5v2.800" stroke="#444" stroke-width=".8"/><path d="M270.5 444.00h2.800M619.5 444.00h-2.800" stroke="#444" stroke-width=".8"/><path d="M479.90 565.5v-2.800M479.90 322.5v2.800" stroke="#444" stroke-width=".8"/><path d="M270.5 419.70h2.800M619.5 419.70h-2.800" stroke="#444" stroke-width=".8"/><path d="M514.80 565.5v-2.800M514.80 322.5v2.800" stroke="#444" stroke-width=".8"/><path d="M270.5 395.40h2.800M619.5 395.40h-2.800" stroke="#444" stroke-width=".8"/><path d="M549.70 565.5v-2.800M549.70 322.5v2.800" stroke="#444" stroke-width=".8"/><path d="M270.5 371.10h2.800M619.5 371.10h-2.800" stroke="#444" stroke-width=".8"/><path d="M584.60 565.5v-2.800M584.60 322.5v2.800" stroke="#444" stroke-width=".8"/><path d="M270.5 346.80h2.800M619.5 346.80h-2.800" stroke="#444" stroke-width=".8"/><path d="M619.50 565.5v-2.800M619.50 322.5v2.800" stroke="#444" stroke-width=".8"/><path d="M270.5 322.50h2.800M619.5 322.50h-2.800" stroke="#444" stroke-width=".8"/>
<polyline points="270.5,565.5 273.99,565.48 277.48,565.40 280.97,565.28 284.46,565.11 287.95,564.89 291.44,564.63 294.93,564.31 298.42,563.94 301.91,563.53 305.40,563.07 308.89,562.56 312.38,562.00 315.87,561.39 319.36,560.74 322.85,560.03 326.34,559.28 329.83,558.48 333.32,557.63 336.81,556.73 340.30,555.78 343.79,554.78 347.28,553.74 350.77,552.65 354.26,551.50 357.75,550.31 361.24,549.07 364.73,547.79 368.22,546.45 371.71,545.06 375.20,543.63 378.69,542.15 382.18,540.62 385.67,539.04 389.16,537.41 392.65,535.73 396.14,534.01 399.63,532.23 403.12,530.41 406.61,528.54 410.10,526.62 413.59,524.65 417.08,522.63 420.57,520.57 424.06,518.46 427.55,516.29 431.04,514.08 434.53,511.82 438.02,509.51 441.51,507.16 445.00,504.75 448.49,502.30 451.98,499.79 455.47,497.24 458.96,494.64 462.45,491.99 465.94,489.30 469.43,486.55 472.92,483.75 476.41,480.91 479.90,478.02 483.39,475.08 486.88,472.09 490.37,469.05 493.86,465.97 497.35,462.83 500.84,459.65 504.33,456.42 507.82,453.14 511.31,449.81 514.80,446.43 518.29,443.00 521.78,439.53 525.27,436.01 528.76,432.43 532.25,428.81 535.74,425.14 539.23,421.43 542.72,417.66 546.21,413.84 549.70,409.98 553.19,406.07 556.68,402.11 560.17,398.10 563.66,394.04 567.15,389.93 570.64,385.78 574.13,381.57 577.62,377.32 581.11,373.02 584.60,368.67 588.09,364.27 591.58,359.82 595.07,355.33 598.56,350.79 602.05,346.19 605.54,341.55 609.03,336.86 612.52,332.12 616.01,327.34 619.50,322.50" fill="none" stroke="#2f86d6" stroke-width="1.250" stroke-linejoin="round"/>
<text x="270.50" y="575.500" text-anchor="middle">0</text><text x="267" y="568.30" text-anchor="end">0</text><text x="305.40" y="575.500" text-anchor="middle">10</text><text x="267" y="544.00" text-anchor="end">1000</text><text x="340.30" y="575.500" text-anchor="middle">20</text><text x="267" y="519.70" text-anchor="end">2000</text><text x="375.20" y="575.500" text-anchor="middle">30</text><text x="267" y="495.40" text-anchor="end">3000</text><text x="410.10" y="575.500" text-anchor="middle">40</text><text x="267" y="471.10" text-anchor="end">4000</text><text x="445.00" y="575.500" text-anchor="middle">50</text><text x="267" y="446.80" text-anchor="end">5000</text><text x="479.90" y="575.500" text-anchor="middle">60</text><text x="267" y="422.50" text-anchor="end">6000</text><text x="514.80" y="575.500" text-anchor="middle">70</text><text x="267" y="398.20" text-anchor="end">7000</text><text x="549.70" y="575.500" text-anchor="middle">80</text><text x="267" y="373.90" text-anchor="end">8000</text><text x="584.60" y="575.500" text-anchor="middle">90</text><text x="267" y="349.60" text-anchor="end">9000</text><text x="619.50" y="575.500" text-anchor="middle">100</text><text x="267" y="325.30" text-anchor="end">10000</text>
</svg>
<svg class="a" style="left:216.500px;top:202.800px" width="9.500" height="8.600" viewBox="0 0 11 10"><path d="M.3 5.800l2.800-1.300 1.300 1.400-1.500 1.200z" fill="#3a7bc0"/><path d="M3.100 4.500c1.200-.8 2.200-3.300 3.500-4.100.9-.3 1.900 2.600 3.900 7.300-1.100-.6-2-1.500-2.700-1.300-.8.300-1.400 1.800-2.300 2.800l-2.600-2.100 1.500-1.200z" fill="#d9541e"/><path d="M6.600.4c.9-.3 1.900 2.600 3.900 7.300-1.100-.6-2-1.500-2.700-1.300-.5-2.300-.7-4.500-1.200-6z" fill="#f6a21b"/></svg>
<div class="a" style="left:592px;top:207px;width:6px;height:1px;background:#e8e8e8"></div><div class="a" style="left:618px;top:204px;width:6.500px;height:6.500px;border:1px solid #e8e8e8;border-radius:1px"></div><svg class="a" style="left:644.500px;top:203.500px" width="7" height="7" viewBox="0 0 7 7"><path d="M.500.500l6 6M6.500.500l-6 6" stroke="#eee" stroke-width=".9"/></svg>
<svg class="a" style="left:650px;top:221px" width="9" height="9" viewBox="0 0 9 9"><rect x=".8" y=".8" width="5" height="5" rx="1" fill="none" stroke="#fff" stroke-width=".9"/><rect x="3" y="3" width="5" height="5" rx="1" fill="#fff"/><path d="M4.500 4.500h2.200v2.200" stroke="#004175" stroke-width=".8" fill="none"/></svg>
<svg class="a" style="left:222px;top:238.500px" width="15" height="15" viewBox="0 0 15 15"><path d="M.600 4c0-.5.300-.8.800-.8h8.500l1.700 1.700v8.300c0 .5-.3.800-.8.800h-9.400c-.5 0-.8-.3-.8-.8z" fill="#d4d4d4" stroke="#8a8a8a" stroke-width=".9"/><rect x="2.600" y="3.600" width="6" height="3.500" fill="#f0f0f0" stroke="#999" stroke-width=".5"/><rect x="3" y="9.500" width="6" height="4" fill="#bdbdbd" stroke="#888" stroke-width=".5"/><rect x="3.600" y=".6" width="10.800" height="6" rx="1" fill="#f4f9ff" stroke="#3d85d8" stroke-width=".9"/><path d="M5.800 4.600h1.200M8.400 4.600h1.200M11 4.600h1.200" stroke="#2b64ad" stroke-width="1.200"/></svg>
<div class="t c " style="left:188.5px;width:80px;top:257.3px;">Save As</div>
<div class="dd" style="left:226.5px;top:269.5px"></div>
<svg class="a" style="left:247px;top:237px" width="9" height="9" viewBox="0 0 9 9"><path d="M.600 5.500v-4c0-.5.300-.9.900-.9h4" fill="none" stroke="#777" stroke-width=".8"/><rect x="2.500" y="2.500" width="6" height="6" rx="1" fill="#fafafa" stroke="#666" stroke-width=".9"/></svg>
<div class="t" style="left:260px;top:238.2px;">Copy Figure</div>
<svg class="a" style="left:246.500px;top:251px" width="10" height="10" viewBox="0 0 10 10"><rect x="2.300" y=".6" width="5.400" height="3" fill="#fafafa" stroke="#666" stroke-width=".8"/><rect x=".6" y="3.300" width="8.800" height="4" rx=".8" fill="#e2e2e2" stroke="#666" stroke-width=".8"/><rect x="2.300" y="5.600" width="5.400" height="3.800" fill="#fafafa" stroke="#666" stroke-width=".8"/><path d="M3.300 7.500h3.400" stroke="#888" stroke-width=".6"/></svg>
<div class="t" style="left:260px;top:252px;">Print</div>
<div class="a" style="left:247.800px;top:266px;width:8.500px;height:8.500px;background:#fff;border:1px solid #7a7a7a;border-radius:1px"></div>
<div class="t" style="left:260px;top:266px;">Show Code</div>
<div class="t c gl" style="left:216.7px;width:80px;top:278.3px;transform:scaleX(0.87)">FILE</div>
<div class="a" style="left:301px;top:237px;width:1px;height:49px;background:#d6d6d6"></div>
<div class="a" style="left:303.500px;top:236.500px;width:334.500px;height:39px;background:#fff;border:1px solid #dcdcdc;border-radius:1.500px"></div>
<div class="a" style="left:626.500px;top:237.500px;width:10.500px;height:37px;background:#f3f3f3;border-left:1px solid #e2e2e2"></div>
<div class="dd" style="left:629.9px;top:254.5px"></div>
<div class="a" style="left:640px;top:237px;width:1px;height:49px;background:#d6d6d6"></div>
<svg class="a" style="left:0;top:0;pointer-events:none" width="1000" height="300" viewBox="0 0 1000 300"><rect x="316.3" y="241.8" width="21" height="17.5" rx="1.300" fill="#f7f7f7" stroke="#9a9a9a" stroke-width="1"/><path d="M320.8 252.05l3.500-3 3.500 3 4-3.500" fill="none" stroke="#a8a8a8" stroke-width=".9"/><path d="M320.200 239.400h13.500" stroke="#777" stroke-width="1.400"/><rect x="355.8" y="241.8" width="21" height="17.5" rx="1.300" fill="#f7f7f7" stroke="#9a9a9a" stroke-width="1"/><path d="M360.3 252.05l3.500-3 3.500 3 4-3.500" fill="none" stroke="#a8a8a8" stroke-width=".9"/><path d="M359.400 239.400h13.500" stroke="#888" stroke-width="1.400"/><rect x="395.3" y="242" width="21" height="17" rx="1.300" fill="#f7f7f7" stroke="#9a9a9a" stroke-width="1"/><path d="M399.8 252.0l3.500-3 3.500 3 4-3.500" fill="none" stroke="#a8a8a8" stroke-width=".9"/><path d="M399 261.300h14" stroke="#777" stroke-width="1.400"/><rect x="435" y="242" width="20.5" height="17" rx="1.300" fill="#f7f7f7" stroke="#9a9a9a" stroke-width="1"/><path d="M439.25 252.0l3.500-3 3.500 3 4-3.500" fill="none" stroke="#a8a8a8" stroke-width=".9"/><path d="M432.300 245.300v10" stroke="#666" stroke-width="1.300"/><rect x="474.5" y="242.3" width="20.5" height="16.5" rx="1.300" fill="#f7f7f7" stroke="#9a9a9a" stroke-width="1"/><path d="M478.75 252.05l3.500-3 3.500 3 4-3.500" fill="none" stroke="#a8a8a8" stroke-width=".9"/><rect x="488.300" y="239.400" width="9" height="9" rx="1" fill="#fff" stroke="#8c8c8c" stroke-width=".9"/><rect x="489.800" y="241.200" width="1.800" height="1.800" fill="#2d76d0"/><rect x="489.800" y="244.600" width="1.800" height="1.800" fill="#d9441e"/><path d="M492.600 242.100h3.200M492.600 245.500h3.200" stroke="#999" stroke-width=".7"/><rect x="514" y="242.3" width="19.5" height="16.5" rx="1.300" fill="#f7f7f7" stroke="#9a9a9a" stroke-width="1"/><path d="M517.75 252.05l3.500-3 3.500 3 4-3.500" fill="none" stroke="#a8a8a8" stroke-width=".9"/><defs><linearGradient id="cb" x1="0" y1="0" x2="0" y2="1"><stop offset="0" stop-color="#f5f012"/><stop offset=".3" stop-color="#e8b92a"/><stop offset=".5" stop-color="#35b89a"/><stop offset=".72" stop-color="#1b7fd8"/><stop offset="1" stop-color="#3b1fa0"/></linearGradient></defs><rect x="533.800" y="240.400" width="3.600" height="19.300" fill="url(#cb)"/><rect x="553.300" y="243.500" width="21" height="16.700" rx="1" fill="#fcfcfc" stroke="#8c8c8c" stroke-width="1"/><path d="M556.80 243.500v16.700" stroke="#9a9a9a" stroke-width=".6"/><path d="M560.30 243.500v16.700" stroke="#9a9a9a" stroke-width=".6"/><path d="M563.80 243.500v16.700" stroke="#9a9a9a" stroke-width=".6"/><path d="M567.30 243.500v16.700" stroke="#9a9a9a" stroke-width=".6"/><path d="M570.80 243.500v16.700" stroke="#9a9a9a" stroke-width=".6"/><path d="M553.300 246.84h21" stroke="#9a9a9a" stroke-width=".6"/><path d="M553.300 250.18h21" stroke="#9a9a9a" stroke-width=".6"/><path d="M553.300 253.52h21" stroke="#9a9a9a" stroke-width=".6"/><path d="M553.300 256.86h21" stroke="#9a9a9a" stroke-width=".6"/><rect x="592.900" y="243.500" width="21" height="16.700" rx="1" fill="#fcfcfc" stroke="#8c8c8c" stroke-width="1"/><path d="M597.10 243.500v16.700" stroke="#9a9a9a" stroke-width=".6"/><path d="M601.30 243.500v16.700" stroke="#9a9a9a" stroke-width=".6"/><path d="M605.50 243.500v16.700" stroke="#9a9a9a" stroke-width=".6"/><path d="M609.70 243.500v16.700" stroke="#9a9a9a" stroke-width=".6"/></svg>
<div class="t c " style="left:287px;width:80px;top:264.2px;">Title</div>
<div class="t c " style="left:326.4px;width:80px;top:264.2px;">Subtitle</div>
<div class="t c " style="left:365.8px;width:80px;top:264.2px;">X-Label</div>
<div class="t c " style="left:405.8px;width:80px;top:264.2px;">Y-Label</div>
<div class="t c " style="left:445.6px;width:80px;top:264.2px;">Legend</div>
<div class="t c " style="left:484.79999999999995px;width:80px;top:264.2px;">Colorbar</div>
<div class="t c " style="left:524.4px;width:80px;top:264.2px;">Grid</div>
<div class="t c " style="left:564px;width:80px;top:264.2px;">X-Grid</div>
<div class="t c gl" style="left:431px;width:80px;top:278.3px;transform:scaleX(0.975)">LABELS AND ANNOTATIONS</div>
<svg class="a" style="left:650.500px;top:278.500px" width="7" height="7" viewBox="0 0 7 7"><path d="M.300.800h6.400M.300 2.300h6.400" stroke="#777" stroke-width=".7"/><path d="M3.500 3.300l2.800 3.200h-5.600z" fill="#777"/></svg>
<!--FIGWIN-->

<svg class="a" style="left:835px;top:750px" width="165" height="57" viewBox="0 0 165 57" font-family="Liberation Sans, sans-serif" font-weight="bold" font-size="19.800">
<g fill="#fff" stroke="#3a3a3a" stroke-width="2.600" stroke-linejoin="round" paint-order="stroke fill">
<text x="10.200" y="36.200" textLength="41.500" lengthAdjust="spacingAndGlyphs">ВОТ</text>
<text x="92.600" y="36.200" textLength="60" lengthAdjust="spacingAndGlyphs">СОФТ</text>
</g>
<g stroke="#333" stroke-width="1" stroke-linejoin="round">
<path d="M58.500 13.500l13-3.500 3.500 13.500-13 3.500z" fill="#f4e8a8"/>
<path d="M62 15.500l8-2.200 3 11.500-8 2.200z" fill="#f4748c" stroke-width=".8"/>
<path d="M70.500 17l7-1.300 3.200 2.800 1.500 8.500-9.500 2z" fill="#fbf7e6"/>
<path d="M77.500 15.700l.6 3.300 2.600-.5z" fill="#f0e6b0" stroke-width=".7"/>
<path d="M59 29h17v13.800h-17z" fill="#a6e4e0"/>
<path d="M76 29h9.500v12l-9.500 1.800z" fill="#5aa6a8"/>
<path d="M59 29l-3.800-4.500h18l2.800 4.500z" fill="#7fd0cc"/>
<path d="M76 29l4-4.500h9.500l-4 4.500z" fill="#6fc0c0"/>
</g>
</svg>
<!--WATERMARK-->
</body></html>
